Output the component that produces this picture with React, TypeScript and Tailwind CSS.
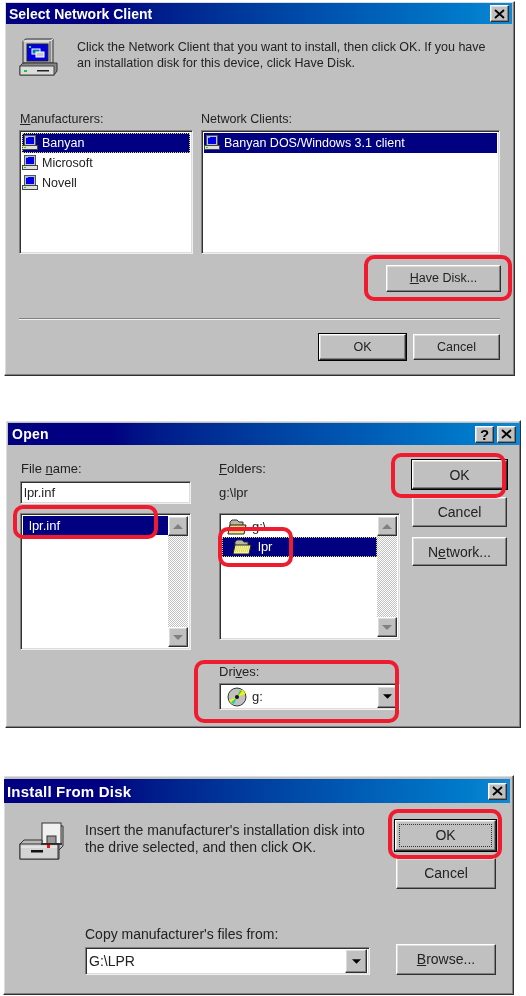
import React from 'react';

const raised =
  'border border-t-white border-l-white border-r-[#303030] border-b-[#303030] shadow-[inset_-1px_-1px_0_#808080,inset_1px_1px_0_#dcdcdc] bg-[#c0c0c0]';
const sunken =
  'border border-t-[#808080] border-l-[#808080] border-r-[#f0f0f0] border-b-[#f0f0f0] shadow-[inset_1px_1px_0_#303030,inset_-1px_-1px_0_#dcdcdc] bg-white';

function CloseGlyph({ glyph }: { glyph: string }) {
  return (
    <div className={`${raised} w-[19px] h-[17px] flex items-center justify-center text-[15px] font-bold text-black leading-none`}>
      {glyph === 'x' ? (
        <svg width="11" height="10" viewBox="0 0 11 10">
          <path d="M1 1l9 8M10 1l-9 8" stroke="#000" strokeWidth="1.8" />
        </svg>
      ) : (
        glyph
      )}
    </div>
  );
}

function TitleBar({ title, help, className, textClass }: { title: string; help?: boolean; className: string; textClass: string }) {
  return (
    <div className={`flex items-center justify-between bg-gradient-to-r from-[#000080] via-[#000080] via-20% to-[#1088d4] ${className}`}>
      <span className={`text-white font-bold leading-none ${textClass}`}>{title}</span>
      <div className="flex gap-[3px]">
        {help && <CloseGlyph glyph="?" />}
        <CloseGlyph glyph="x" />
      </div>
    </div>
  );
}

function Btn({ children, className = '', strong }: { children: React.ReactNode; className?: string; strong?: boolean }) {
  return (
    <div
      className={`${raised} ${strong ? 'outline outline-1 outline-black' : ''} flex items-center justify-center text-[#222] ${className}`}
    >
      {children}
    </div>
  );
}

function PcIcon() {
  return (
    <svg width="16" height="16" viewBox="0 0 16 16" className="shrink-0">
      <rect x="2.500" y="0.500" width="11" height="10" fill="#c0c0c0" stroke="#555" />
      <rect x="4" y="2" width="8" height="7" fill="#0000e8" />
      <rect x="4" y="2" width="2" height="1" fill="#40c0ff" />
      <rect x="0.500" y="10.500" width="15" height="4" fill="#e0e0e0" stroke="#444" />
      <rect x="2" y="12" width="2" height="1" fill="#10d020" />
    </svg>
  );
}

function BigPcIcon() {
  return (
    <svg width="40" height="40" viewBox="0 0 40 40" className="shrink-0">
      <path d="M4 3l3-2h27v24H4z" fill="#c8c8c8" stroke="#333" />
      <path d="M4 3h27l3-2" fill="none" stroke="#f4f4f4" />
      <path d="M31 3v22" stroke="#555" />
      <rect x="8" y="6" width="21" height="17" fill="#0000e0" stroke="#222" />
      <rect x="10" y="8" width="2" height="2" fill="#2ad0ff" />
      <rect x="13" y="11" width="8" height="5" fill="#0a7ca8" stroke="#fff" />
      <rect x="17" y="14" width="8" height="5" fill="#c8c8c8" stroke="#fff" />
      <path d="M1 28l3-3h34v8l-3 4H1z" fill="#888" stroke="#333" />
      <rect x="1" y="28" width="34" height="9" fill="#dcdcdc" stroke="#444" />
      <rect x="5" y="32" width="3" height="2" fill="#10d030" />
      <rect x="18" y="32" width="12" height="1.500" fill="#222" />
    </svg>
  );
}

function FolderIcon({ open }: { open?: boolean }) {
  return (
    <svg width="20" height="16" viewBox="0 0 20 16" className="shrink-0">
      <path d="M3 14V3l2-2h5l2 2h4v3" fill="#b8b8a0" stroke="#333" />
      <path d="M1 15l2-9h16l-2 9z" fill={open ? '#f4f4a0' : '#e8e490'} stroke="#222" />
      <path d="M4 8h13M3.500 10h13M3 12h13" stroke="#c8c020" strokeDasharray="1 1" />
    </svg>
  );
}

function CdIcon() {
  return (
    <svg width="20" height="20" viewBox="0 0 20 20" className="shrink-0">
      <circle cx="10" cy="10" r="9" fill="#c0c0c0" stroke="#333" />
      <path d="M10 10L15 2.500A9 9 0 0 1 18.500 7z" fill="#f4f000" />
      <path d="M10 10L13 3.500A8 8 0 0 1 15 4z" fill="#10d060" />
      <path d="M10 10L2 13A9 9 0 0 0 6 17.500z" fill="#f4f000" />
      <path d="M10 10L4 15.500A8 8 0 0 0 7 17z" fill="#10d0c0" />
      <circle cx="10" cy="10" r="2" fill="#111" />
    </svg>
  );
}

function DriveIcon() {
  return (
    <svg width="46" height="38" viewBox="0 0 46 38">
      <rect x="23" y="1" width="19" height="21" fill="#f0f0f0" stroke="#333" />
      <path d="M42 4h2v20l-4 4" fill="none" stroke="#333" />
      <rect x="28" y="14" width="9" height="8" fill="#999" stroke="#333" />
      <path d="M1 22l4-4h18v4h17v15H1z" fill="#b8b8b8" stroke="#333" />
      <rect x="1" y="22" width="38" height="15" fill="#d4d4d4" stroke="#333" />
      <path d="M2 25h36" stroke="#f2f2f2" />
      <rect x="12" y="28" width="12" height="2.500" fill="#111" />
      <rect x="28" y="22" width="3" height="4" fill="#f01010" />
      <path d="M22 22h21" stroke="#222" strokeWidth="1.500" />
    </svg>
  );
}

function ArrowBtn({ dir, dark, className = '' }: { dir: 'up' | 'down'; dark?: boolean; className?: string }) {
  return (
    <div className={`${raised} flex items-center justify-center shrink-0 ${className}`}>
      <svg width={dark ? 9 : 10} height="5" viewBox="0 0 10 5">
        <path d={dir === 'up' ? 'M5 0l5 5H0z' : 'M0 0h10L5 5z'} fill={dark ? '#000' : '#808080'} />
      </svg>
    </div>
  );
}

function Scrollbar() {
  return (
    <div className="w-[20px] h-full flex flex-col justify-between bg-[conic-gradient(#fff_25%,#c0c0c0_0_50%,#fff_0_75%,#c0c0c0_0)] bg-[length:2px_2px]">
      <ArrowBtn dir="up" className="h-[20px]" />
      <ArrowBtn dir="down" className="h-[20px]" />
    </div>
  );
}

function Ring({ className }: { className: string }) {
  return <div className={`absolute border-[4px] border-[#ee1c2e] rounded-[10px] ${className}`} />;
}

function ListRow({ label, selected, focus }: { label: string; selected?: boolean; focus?: boolean }) {
  return (
    <div
      className={`h-[20px] flex items-center gap-[4px] text-[12.5px] ${selected ? 'bg-[#000080] text-white' : 'text-[#222]'} ${
        focus ? 'outline-1 outline-dotted outline-[#d8d860] -outline-offset-1' : ''
      }`}
    >
      <PcIcon />
      <span>{label}</span>
    </div>
  );
}

function NetworkDialog() {
  return (
    <section className={`relative ml-[4px] mt-[1px] w-[511px] h-[375px] pt-px ${raised}`}>
      <TitleBar title="Select Network Client" className="h-[21px] ml-px mr-[2px] pl-[3px] pr-[3px]" textClass="text-[14px]" />
      <div className="flex pl-[14px] pt-[14px]">
        <BigPcIcon />
        <p className="ml-[18px] w-[415px] mt-[1px] text-[12.5px] leading-[16px] text-[#222]">
          Click the Network Client that you want to install, then click OK. If you have an installation disk for this device, click Have Disk.
        </p>
      </div>
      <div className="flex gap-[8px] pl-[14px] mt-[33px] text-[12.5px] leading-[16px] text-[#222]">
        <div className="w-[174px]">
          <div className="mb-[3px] pl-px">
            <u>M</u>anufacturers:
          </div>
          <div className={`${sunken} h-[124px] p-[2px]`}>
            <ListRow label="Banyan" selected focus />
            <ListRow label="Microsoft" />
            <ListRow label="Novell" />
          </div>
        </div>
        <div className="w-[299px]">
          <div className="mb-[3px]">Network Clients:</div>
          <div className={`${sunken} h-[124px] p-[2px]`}>
            <ListRow label="Banyan DOS/Windows 3.1 client" selected />
          </div>
        </div>
      </div>
      <div className="flex justify-end pr-[13px] mt-[11px]">
        <Btn className="w-[115px] h-[27px] text-[12.5px]">
          <span>
            <u>H</u>ave Disk...
          </span>
        </Btn>
      </div>
      <div className="mx-[14px] mt-[26px] h-[2px] border-t border-t-[#808080] border-b border-b-[#f0f0f0]" />
      <div className="flex justify-end gap-[7px] pr-[14px] mt-[14px]">
        <Btn strong className="w-[87px] h-[26px] text-[12.5px]">OK</Btn>
        <Btn className="w-[87px] h-[26px] text-[12.5px]">Cancel</Btn>
      </div>
      <Ring className="left-[359px] top-[253px] w-[148px] h-[46px]" />
    </section>
  );
}

function OpenDialog() {
  return (
    <section className={`relative ml-[5px] mt-[44px] w-[516px] h-[308px] pt-[2px] ${raised}`}>
      <TitleBar title="Open" help className="h-[22px] ml-[2px] pl-[4px] pr-[4px]" textClass="text-[14px] tracking-[0.25px]" />
      <div className="flex pl-[14px] pt-[15px] text-[13px] leading-[16px] text-[#222]">
        <div className="w-[171px]">
          <div className="h-[21px] pt-px pl-px">
            File <u>n</u>ame:
          </div>
          <div className={`${sunken} h-[23px] pl-[3px] flex items-center`}>lpr.inf</div>
          <div className={`${sunken} mt-[9px] h-[137px] p-[2px] flex`}>
            <div className="flex-1">
              <div className="h-[19px] bg-[#000080] text-white pl-[6px] flex items-center">lpr.inf</div>
            </div>
            <Scrollbar />
          </div>
        </div>
        <div className="ml-[28px] w-[181px]">
          <div className="h-[21px] pt-px">
            <u>F</u>olders:
          </div>
          <div className="h-[32px] pt-[4px]">g:\lpr</div>
          <div className={`${sunken} h-[127px] p-[2px] flex`}>
            <div className="flex-1">
              <div className="h-[21px] flex items-center gap-[5px] pl-[5px]">
                <FolderIcon />
                <span>g:\</span>
              </div>
              <div className="h-[20px] flex items-center gap-[6px] pl-[10px] bg-[#000080] text-white outline-1 outline-dotted outline-[#d8d860] -outline-offset-1">
                <FolderIcon open />
                <span>lpr</span>
              </div>
            </div>
            <Scrollbar />
          </div>
          <div className="mt-[24px] mb-[3px]">
            Dri<u>v</u>es:
          </div>
          <div className={`${sunken} h-[27px] flex items-center pl-[7px] pr-[2px] gap-[5px]`}>
            <CdIcon />
            <span className="flex-1">g:</span>
            <ArrowBtn dir="down" dark className="w-[20px] h-[22px]" />
          </div>
        </div>
        <div className="ml-[12px] w-[95px] flex flex-col">
          <Btn strong className="w-[95px] h-[29px] text-[14px]">OK</Btn>
          <Btn className="w-[95px] h-[30px] mt-[8px] text-[14px]">Cancel</Btn>
          <Btn className="w-[95px] h-[29px] mt-[10px] text-[14px]">
            <span>
              N<u>e</u>twork...
            </span>
          </Btn>
        </div>
      </div>
      <Ring className="left-[385px] top-[32px] w-[115px] h-[45px]" />
      <Ring className="left-[7px] top-[84px] w-[145px] h-[34px]" />
      <Ring className="left-[212px] top-[106px] w-[75px] h-[40px]" />
      <Ring className="left-[188px] top-[239px] w-[205px] h-[63px]" />
    </section>
  );
}

function InstallDialog() {
  return (
    <section className={`relative ml-[3px] mt-[47px] w-[511px] h-[220px] pt-[3px] ${raised}`}>
      <TitleBar title="Install From Disk" className="h-[24px] mr-[3px] pl-[3px] pr-[3px]" textClass="text-[15px] tracking-[0.2px]" />
      <div className="flex pl-[15px] text-[14px] leading-[17px] text-[#222]">
        <div className="pt-[19px] w-[66px] shrink-0">
          <DriveIcon />
        </div>
        <div className="w-[310px] shrink-0">
          <p className="mt-[19px] w-[300px] h-[104px]">Insert the manufacturer's installation disk into the drive selected, and then click OK.</p>
          <div className="mb-[4px]">Copy manufacturer's files from:</div>
          <div className={`${sunken} w-[285px] h-[28px] flex items-center pl-[3px] pr-[2px]`}>
            <span className="flex-1">G:\LPR</span>
            <ArrowBtn dir="down" dark className="w-[22px] h-[24px]" />
          </div>
        </div>
        <div className="pt-[17px] flex flex-col w-[101px]">
          <Btn strong className="h-[31px] w-[101px] text-[14px] relative">
            OK
            <div className="absolute inset-[3px] border border-dotted border-[#333]" />
          </Btn>
          <Btn className="h-[31px] w-[100px] ml-px mt-[7px] text-[14px]">Cancel</Btn>
          <Btn className="h-[31px] w-[100px] ml-px mt-[55px] text-[14px]">
            <span>
              <u>B</u>rowse...
            </span>
          </Btn>
        </div>
      </div>
      <Ring className="left-[384px] top-[33px] w-[114px] h-[50px]" />
    </section>
  );
}

export default function App() {
  return (
    <main className="w-[526px] h-[996px] overflow-hidden bg-white font-['Liberation_Sans',sans-serif] blur-[0.5px] flow-root">
      <NetworkDialog />
      <OpenDialog />
      <InstallDialog />
    </main>
  );
}
